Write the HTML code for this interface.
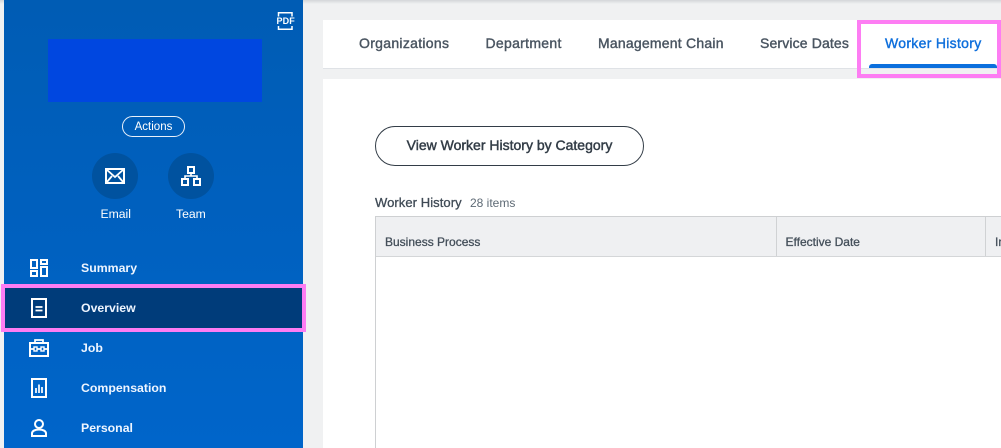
<!DOCTYPE html>
<html><head><meta charset="utf-8"><style>
html,body{margin:0;padding:0}
body{width:1001px;height:448px;overflow:hidden;position:relative;background:#f0f1f2;font-family:"Liberation Sans",sans-serif}
.a{position:absolute;white-space:nowrap}
.shadow{left:0;top:0;width:1001px;height:4px;background:linear-gradient(#d4d6d9,#f0f1f2)}
.side{left:4px;top:0;width:299px;height:448px;background:linear-gradient(#005cb4,#0065ca)}
.w{color:#fff;font-size:12.2px}
.nav{left:81px;color:#eef5ff;font-size:12.3px;font-weight:bold;line-height:16px}
.tab{top:34px;font-size:14px;line-height:18px;color:#4a5561;-webkit-text-stroke:.4px #4a5561;letter-spacing:.22px}
svg{position:absolute;overflow:visible}
.c{width:46px;height:46px;border-radius:50%;background:#00529f;top:153px}
.th{top:235px;font-size:12px;line-height:14px;color:#444f5a;-webkit-text-stroke:.3px #444f5a}
</style></head><body>
<div class="a shadow"></div>
<div class="a side"></div>

<svg style="left:277px;top:12px" width="17" height="19" fill="none" stroke="#fff" stroke-width="1.5"><path d="M1.500 4.500V.8H15V4.500M1.500 14V17.200H15V14"/></svg>
<div class="a" style="left:276.500px;top:15px;font-size:9px;line-height:12px;font-weight:bold;color:#fff;letter-spacing:.1px">PDF</div>

<div class="a" style="left:48px;top:39px;width:214px;height:63px;background:#0047e0"></div>
<div class="a w" style="left:122px;top:116px;width:61px;height:19px;border:1px solid #e8f0fa;border-radius:11px;text-align:center;line-height:20px;font-size:11.5px">Actions</div>

<div class="a c" style="left:92px"></div>
<div class="a c" style="left:168px"></div>
<svg style="left:105px;top:168px" width="20" height="16" fill="none" stroke="#fff" stroke-width="2"><rect x="1" y="1" width="18" height="14" fill="none"/><path d="M1.500 1.500L10 9L18.500 1.500M1.500 14.500L7 8M18.500 14.500L13 8" stroke-width="1.800"/></svg>
<svg style="left:181px;top:166px" width="20" height="20" fill="none" stroke="#fff" stroke-width="2"><rect x="7" y="1" width="6" height="6"/><rect x="1" y="13" width="6" height="6"/><rect x="13" y="13" width="6" height="6"/><path d="M10 7V10M4 13V10H16V13" stroke-width="1.600"/></svg>
<div class="a w" style="left:100.500px;top:207px;line-height:15px">Email</div>
<div class="a w" style="left:176px;top:207px;line-height:15px">Team</div>

<div class="a" style="left:1px;top:284px;width:297px;height:40px;border:4px solid #fd7df3;background:#003c7a"></div>

<svg style="left:30px;top:259px" width="18" height="18" fill="none" stroke="#fff" stroke-width="2"><rect x="1" y="1" width="6" height="8"/><rect x="11" y="1" width="6" height="4"/><rect x="1" y="12" width="6" height="5"/><rect x="11" y="8" width="6" height="9"/></svg>
<svg style="left:31px;top:298px" width="16" height="20" fill="none" stroke="#fff" stroke-width="2"><rect x="1" y="1" width="14" height="18"/><path d="M4.500 9H11.500M4.500 12.500H11.500" stroke-width="1.700"/></svg>
<svg style="left:29px;top:338px" width="20" height="19" fill="none" stroke="#fff" stroke-width="2"><rect x="1" y="5" width="18" height="13"/><path d="M6 5V2H14V5M1 11H5M15 11H19M8 11H12" stroke-width="1.700"/><rect x="5" y="9" width="3" height="4" stroke-width="1.400"/><rect x="12" y="9" width="3" height="4" stroke-width="1.400"/></svg>
<svg style="left:31px;top:378px" width="16" height="20" fill="none" stroke="#fff" stroke-width="2"><rect x="1" y="1" width="14" height="18"/><path d="M5 15V10M8 15V6.500M11 15V9" stroke-width="1.700"/></svg>
<svg style="left:31px;top:419px" width="16" height="18" fill="none" stroke="#fff" stroke-width="2"><circle cx="8" cy="5" r="4"/><path d="M1 17V14.500C1 12 4 10.500 8 10.500S15 12 15 14.500V17Z"/></svg>

<div class="a nav" style="top:260px">Summary</div>
<div class="a nav" style="top:300px">Overview</div>
<div class="a nav" style="top:340px">Job</div>
<div class="a nav" style="top:380px">Compensation</div>
<div class="a nav" style="top:420px">Personal</div>

<div class="a" style="left:323px;top:20px;width:678px;height:48px;background:#fff;border-bottom:1px solid #dfe2e6"></div>
<div class="a tab" style="left:359px;letter-spacing:.3px">Organizations</div>
<div class="a tab" style="left:485.500px;letter-spacing:.3px">Department</div>
<div class="a tab" style="left:598px">Management Chain</div>
<div class="a tab" style="left:760px;letter-spacing:.14px">Service Dates</div>
<div class="a tab" style="left:885px;color:#0e6fdc;-webkit-text-stroke:.4px #0e6fdc;letter-spacing:.3px">Worker History</div>
<div class="a" style="left:869px;top:64px;width:128px;height:4px;background:#0b6fdd;border-radius:3px 3px 0 0"></div>

<div class="a" style="left:323px;top:79px;width:678px;height:369px;background:#fff"></div>
<div class="a" style="left:857px;top:20px;width:136px;height:50px;border:4px solid #fd7df3"></div>

<div class="a" style="left:375px;top:126px;width:267px;height:38px;border:1px solid #333d47;border-radius:20px;background:#fff;text-align:center;line-height:37px;font-size:14px;color:#333d47;-webkit-text-stroke:.45px #333d47">View Worker History by Category</div>

<div class="a" style="left:375px;top:195px;font-size:13px;line-height:15px;color:#3f4a55;-webkit-text-stroke:.3px #3f4a55;letter-spacing:.07px">Worker History</div>
<div class="a" style="left:470px;top:196px;font-size:12px;line-height:14px;color:#5e6a75">28 items</div>

<div class="a" style="left:375px;top:216px;width:626px;height:232px;border-left:1px solid #ced0d2;border-top:1px solid #ced0d2;box-sizing:border-box"></div>
<div class="a" style="left:376px;top:217px;width:625px;height:39px;background:#eff0f2;border-bottom:1px solid #d4d6d8"></div>
<div class="a" style="left:776px;top:217px;width:1px;height:39px;background:#d0d2d4"></div>
<div class="a" style="left:985px;top:217px;width:1px;height:39px;background:#d0d2d4"></div>
<div class="a th" style="left:385px">Business Process</div>
<div class="a th" style="left:785.500px">Effective Date</div>
<div class="a th" style="left:995px">In</div>
</body></html>
